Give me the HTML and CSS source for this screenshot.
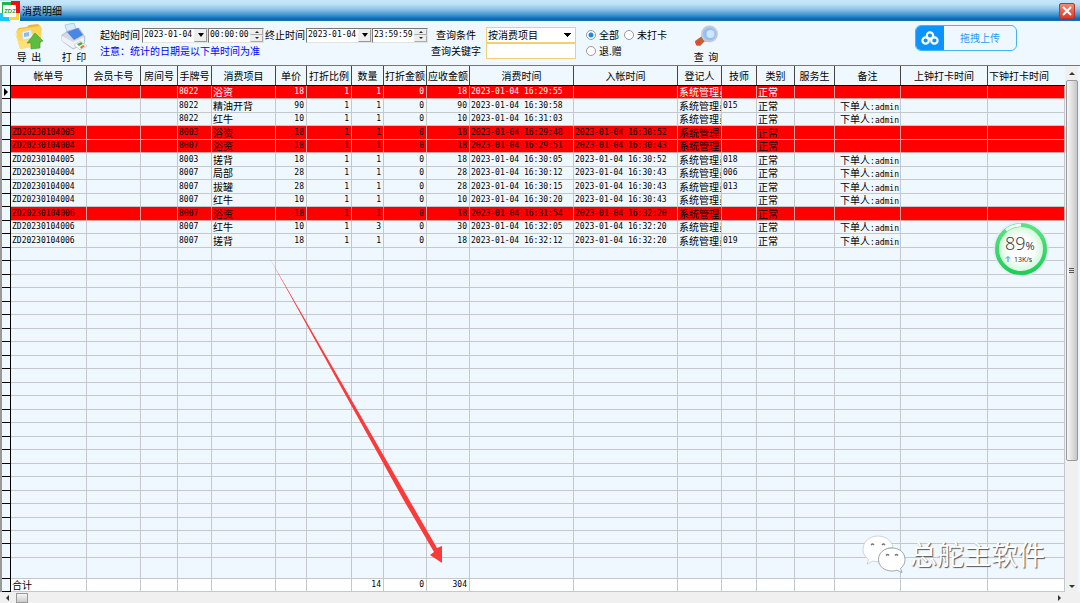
FILE: index.html
```html
<!DOCTYPE html>
<html lang="zh-CN">
<head>
<meta charset="utf-8">
<title>消费明细</title>
<link rel="stylesheet" href="styles.css">
</head>
<body>
<header class="titlebar">
  <svg class="logo" width="20" height="20" viewBox="0 0 20 20" aria-hidden="true">
    <rect width="20" height="20" fill="#fff"/>
    <path d="M2 1h10v4H6v8H2z" fill="#16b84a"/>
    <path d="M11 0h9v12h-4V5h-5z" fill="#f01010"/>
    <path d="M0 12h4v4h6v4H0z" fill="#10ccf8"/>
    <path d="M15 12h4v7H9v-4h6z" fill="#f8d838"/>
    <rect x="3" y="4" width="13" height="12" rx="1" fill="#fff"/>
    <text x="10" y="12" text-anchor="middle" class="logo-text">ZDZ</text>
  </svg>
  <h1 class="title">消费明细</h1>
  <button class="close" type="button" aria-label="关闭">
    <svg width="10" height="10" viewBox="0 0 10 10"><path d="M1 1l8 8M9 1l-8 8" stroke="#fff" stroke-width="2"/></svg>
  </button>
</header>

<form class="toolbar">
  <button class="tool" type="button">
    <svg width="30" height="28" viewBox="0 0 30 28" aria-hidden="true">
      <path d="M3 7l2-2 8-1 2-2 9-1 3 3v16l-20 4z" fill="#eeb535"/>
      <path d="M2 8l4-2 19-3 3 2-2 17-20 4z" fill="#fbd65c"/>
      <path d="M8 9l9-2 2 8-10 2z" fill="#eaf3fc" stroke="#c9d9ec" stroke-width=".6"/>
      <path d="M10 10l5-1v4l-5 1z" fill="#8fb9e8"/>
      <path d="M1 10l5 8 20-3-1 8-19 3z" fill="#fde07a"/>
      <path d="M21 10l8 8-3 1 0 6-9 1 0-6-4 0z" fill="#5cbe3e" stroke="#3f9c2c" stroke-width=".6"/>
    </svg>
    <span>导&nbsp;&nbsp;出</span>
  </button>
  <button class="tool" type="button">
    <svg width="28" height="28" viewBox="0 0 28 28" aria-hidden="true">
      <path d="M5 2l9-2 3 9-9 4z" fill="#d6ecff" stroke="#8fbce8" stroke-width=".7"/>
      <path d="M2 12l6-4 11-3 6 9-1 7-11 5-11-8z" fill="#d3d8e4" stroke="#9ba2b8" stroke-width=".6"/>
      <path d="M7 9l11-4 5 7-9 5z" fill="#4a86e4"/>
      <path d="M2 13l11 6 11-5v6l-11 5-11-7z" fill="#f0f2f7"/>
      <path d="M14 22l6-4 7 5-7 4z" fill="#fff" stroke="#a6adba" stroke-width=".5"/>
      <path d="M17 21l4-2 2 2-4 2z" fill="#47b046"/><path d="M20 24l3-2 2 1-4 3z" fill="#ef6b3a"/>
    </svg>
    <span>打&nbsp;&nbsp;印</span>
  </button>

  <div class="period">
    <div class="line">
      <label for="from-date">起始时间</label>
      <span class="field date"><input id="from-date" value="2023-01-04"><button type="button" class="drop" aria-label="选择日期"></button></span>
      <span class="field time"><input aria-label="起始时刻" value="00:00:00"><span class="spin"><button type="button" aria-label="增加"></button><button type="button" aria-label="减少"></button></span></span>
      <label for="to-date" class="to">终止时间</label>
      <span class="field date"><input id="to-date" value="2023-01-04"><button type="button" class="drop" aria-label="选择日期"></button></span>
      <span class="field time"><input aria-label="终止时刻" value="23:59:59"><span class="spin"><button type="button" aria-label="增加"></button><button type="button" aria-label="减少"></button></span></span>
    </div>
    <p class="note">注意：统计的日期是以下单时间为准</p>
  </div>

  <div class="query">
    <label for="cond">查询条件</label>
    <select id="cond" class="box"><option>按消费项目</option></select>
    <label for="key">查询关键字</label>
    <input id="key" class="box">
  </div>

  <div class="radios">
    <label><input type="radio" name="scope" checked>全部</label>
    <label><input type="radio" name="scope">未打卡</label>
    <label><input type="radio" name="scope">退.赠</label>
  </div>

  <button class="tool search" type="button">
    <svg width="26" height="28" viewBox="0 0 26 28" aria-hidden="true">
      <path d="M2 18l7-5 4 4-6 6-4-1z" fill="#b9653c"/><path d="M2 19l4-2 2 3-4 3z" fill="#e8472b"/>
      <path d="M8 13l4 6 5 0-6-9z" fill="#b4bac6"/>
      <circle cx="16.500" cy="11" r="7.500" fill="#8fc0fa" stroke="#c6cad4" stroke-width="2"/>
      <circle cx="17.500" cy="11" r="4" fill="#cfe6ff"/>
    </svg>
    <span>查&nbsp;&nbsp;询</span>
  </button>

  <button class="upload" type="button">
    <span class="cloud"><svg width="18" height="14" viewBox="0 0 18 14" fill="none" stroke="#fff" stroke-width="2.200"><circle cx="9" cy="4.500" r="3.200"/><circle cx="4.600" cy="9.500" r="3.200"/><circle cx="13.400" cy="9.500" r="3.200"/></svg></span>
    <span class="upload-text">拖拽上传</span>
  </button>
</form>

<main class="grid-area">
  <div class="grid-body">
  <table class="grid">
    <colgroup>
      <col class="w9"><col class="w76"><col class="w54"><col class="w37"><col class="w34"><col class="w64"><col class="w31"><col class="w45"><col class="w32"><col class="w43"><col class="w43"><col class="w104"><col class="w104"><col class="w44"><col class="w35"><col class="w38"><col class="w40"><col class="w66"><col class="w87"><col class="w77">
    </colgroup>
    <thead>
      <tr><th></th><th>帐单号</th><th>会员卡号</th><th>房间号</th><th>手牌号</th><th>消费项目</th><th>单价</th><th>打折比例</th><th>数量</th><th>打折金额</th><th>应收金额</th><th>消费时间</th><th>入帐时间</th><th>登记人</th><th>技师</th><th>类别</th><th>服务生</th><th>备注</th><th>上钟打卡时间</th><th class="left">下钟打卡时间</th></tr>
    </thead>
    <tbody id="rows"></tbody>
    <tfoot>
      <tr><td></td><td class="cn">合计</td><td></td><td></td><td></td><td></td><td></td><td></td><td class="num">14</td><td class="num">0</td><td class="num">304</td><td></td><td></td><td></td><td></td><td></td><td></td><td></td><td></td><td></td></tr>
    </tfoot>
  </table>
  </div>
  <div class="vscroll"><i class="up"></i><div class="vthumb"><i class="grip"></i></div><i class="down"></i></div>
</main>
<div class="hscroll"><i class="prev"></i><i class="hthumb"></i><i class="next"></i></div>

<svg class="pointer" width="180" height="310" viewBox="0 0 180 310" aria-hidden="true">
  <path d="M0 0L168 291L173 289L173 306L161 298L165 295L134 242Z" fill="#fb3a3a"/>
</svg>

<svg class="ball" width="60" height="60" viewBox="0 0 60 60" role="img" aria-label="89% 13K/s">
  <defs>
    <radialGradient id="glow"><stop offset=".5" stop-color="#fff"/><stop offset="1" stop-color="#ccf5d6"/></radialGradient>
    <linearGradient id="ring" x2="0" y2="1"><stop offset="0" stop-color="#5be381"/><stop offset="1" stop-color="#1fce58"/></linearGradient>
  </defs>
  <circle cx="30" cy="30" r="28" fill="#dfe8f0" opacity=".6"/>
  <circle cx="30" cy="30" r="24" fill="url(#glow)" stroke="url(#ring)" stroke-width="4"/>
  <path d="M15 11.300A24 24 0 0 1 30 6" fill="none" stroke="#f2fbf5" stroke-width="3"/>
  <text x="14" y="31" class="pct">89<tspan class="sign">%</tspan></text>
  <path d="M17 43v-5M15 39.500l2-2 2 2" fill="none" stroke="#2196f3"/>
  <text x="23" y="43" class="rate">13K/s</text>
</svg>

<div class="watermark">
  <svg width="44" height="38" viewBox="0 0 44 38" aria-hidden="true">
    <path d="M16 1C7 1 1 7 1 14.500c0 4 2 7.500 5.500 10L5 29l6-3c2 .6 4 .8 6 .7C16 19 23 12 31 12.500 30 6 24 1 16 1z" fill="#fff" stroke="#b4babe" stroke-width=".6"/>
    <path d="M30 13c-8 0-13.500 5-13.500 11.500S22 36 30 36c2 0 3.500-.2 5-.8l5 2.300-1.500-4c3-2.300 4.500-5.300 4.500-9C43 18 38 13 30 13z" fill="#fff" stroke="#8b9195" stroke-width=".8"/>
    <path d="M9 10q1.500-2 3 0M20 10q1.500-2 3 0M24 20.500q1.500-2 3 0M33 20.500q1.500-2 3 0" fill="none" stroke="#777" stroke-width="1.300"/>
  </svg>
  <span>总舵主软件</span>
</div>
<script src="app.js"></script>
</body>
</html>
```

FILE: styles.css
```css
* { box-sizing: border-box; }

body {
  margin: 0;
  min-height: 100vh;
  display: flex;
  flex-direction: column;
  position: relative;
  overflow: hidden;
  background: #f0f8ff;
  color: #000;
  font: 10px/12px "Noto Sans CJK SC", sans-serif;
}

button, input, select { font: inherit; color: inherit; margin: 0; padding: 0; }

/* title bar */
.titlebar {
  display: flex;
  align-items: center;
  height: 21px;
  padding-right: 5px;
  background: linear-gradient(#c3e6fb 0, #bfe2f7 4px, #92c6e8 9px, #3f93cf 15px, #0767b4 19px, #1a6fb5 100%);
}
.logo { display: block; }
.logo-text { font: bold 6px "Liberation Sans", sans-serif; fill: #27a05a; }
.title { flex: 1; margin: 0 2px; font-size: 10px; font-weight: 400; }
.close {
  display: grid;
  place-items: center;
  width: 16px;
  height: 16px;
  border: 1px solid #b8342a;
  border-radius: 2px;
  background: linear-gradient(#f08a78, #dc3a28);
}

/* toolbar */
.toolbar { display: flex; align-items: flex-start; height: 44px; padding: 2px 0 0 14px; }
.tool {
  display: flex;
  flex-direction: column;
  align-items: center;
  width: 30px;
  margin-right: 15px;
  border: 0;
  background: none;
  line-height: 12px;
  white-space: nowrap;
}
.period { width: 328px; margin-left: -4px; padding-top: 4px; }
.line { display: flex; align-items: center; height: 16px; }
.line label { width: 42px; white-space: nowrap; }
.line .to { padding-left: 1px; width: 42px; }
.field {
  display: flex;
  height: 15px;
  border: 1px solid #e3e3e3;
  border-top-color: #777;
  border-left-color: #777;
  background: #fff;
  font: 8px/12px "DejaVu Sans Mono", monospace;
}
.field input { flex: 1; min-width: 0; border: 0; background: none; padding-left: 1px; }
.date { width: 66px; }
.time { width: 56px; }
.drop { width: 13px; border: 1px solid #999; border-top-color: #eee; border-left-color: #eee; background: #eee; display: grid; place-items: center; }
.drop::before { content: ""; border: 3px solid transparent; border-top: 4px solid #000; border-bottom: 0; }
.spin { display: flex; flex-direction: column; width: 13px; }
.spin button { flex: 1; border: 1px solid #aaa; border-top-color: #eee; border-left-color: #eee; background: #eee; display: grid; place-items: center; }
.spin button::before { content: ""; border: 2px solid transparent; border-bottom-color: #222; border-top: 0; }
.spin button + button::before { border: 2px solid transparent; border-top-color: #222; border-bottom: 0; }
.note { margin: 0; color: #00f; line-height: 16px; white-space: nowrap; }

.query {
  display: grid;
  grid-template-columns: 55px 90px;
  grid-auto-rows: 16px;
  align-items: center;
  padding-top: 4px;
  margin-left: 3px;
}
.query label { width: 50px; text-align: center; white-space: nowrap; }
.box { width: 90px; height: 16px; border: 1px solid #f2cf74; background: #fff; outline: 0; }
select.box {
  appearance: none;
  padding-left: 1px;
  background: #fff conic-gradient(from -45deg at 50% 100%, #000 90deg, #fff 0) no-repeat right 4px center / 7px 4px;
}
.radios {
  display: grid;
  grid-template-columns: 38px 44px;
  grid-auto-rows: 16px;
  align-items: center;
  padding: 4px 0 0 10px;
}
.radios label { display: flex; align-items: center; gap: 3px; white-space: nowrap; }
.radios input {
  appearance: none;
  width: 10px;
  height: 10px;
  border: 1px solid #999;
  border-radius: 50%;
  background: #fff;
}
.radios input:checked { background: radial-gradient(circle, #168ce0 0 2px, #fff 3px); }
.search { margin: 0 0 0 23px; }
.upload {
  display: flex;
  width: 102px;
  height: 26px;
  margin: 2px 63px 0 auto;
  overflow: hidden;
  border: 1px solid #45b4f5;
  border-radius: 6px;
  background: #f0f8ff;
  color: #1e9df2;
}
.cloud { display: grid; place-items: center; width: 28px; height: 24px; background: #0b94fb; }
.upload-text { flex: 1; line-height: 24px; text-align: center; }

/* data grid */
.grid-area { flex: 1; display: flex; border-top: 1px solid #777; border-left: 2px solid #999; }
.grid-body { flex: 1; min-width: 0; }
.grid {
  width: 100%;
  height: 526px;
  table-layout: fixed;
  border-collapse: separate;
  border-spacing: 0;
}
.w9 { width: 9px; } .w76 { width: 76px; } .w54 { width: 54px; } .w37 { width: 37px; }
.w34 { width: 34px; } .w64 { width: 64px; } .w31 { width: 31px; } .w45 { width: 45px; }
.w32 { width: 32px; } .w43 { width: 43px; } .w104 { width: 104px; } .w44 { width: 44px; }
.w35 { width: 35px; } .w38 { width: 38px; } .w40 { width: 40px; } .w66 { width: 66px; }
.w87 { width: 87px; } .w77 { width: 77px; }

th, td {
  padding: 0 1px;
  white-space: nowrap;
  border-right: 1px solid #c4c8cc;
  border-bottom: 1px solid #c4c8cc;
  line-height: 12px;
}
th { height: 20px; padding: 0; font-weight: 400; border-right-color: #444; border-bottom: 1px solid #000; }
th.left { text-align: left; padding-left: 1px; border-right: 0; }
td { height: 13px; font: 8px/12px "DejaVu Sans Mono", monospace; }
td.cn { font: 10px/12px "Noto Sans CJK SC", sans-serif; }
td.who { overflow-x: clip; }
td.num { text-align: right; padding-right: 2px; }
td.memo { text-align: right; }
td:first-child { border-color: #000; padding: 0; }
th:first-child { border-right-color: #000; }
.red td:not(:first-child) { background: #f00; border-color: #e0a0a0; }
.current td { color: #fff; }
.current td:first-child::before {
  content: "";
  display: block;
  margin-left: 2px;
  width: 0;
  border: 4px solid transparent;
  border-left: 4px solid #000;
  border-right: 0;
}
.last td { height: 20px; }
tfoot td:not(:first-child) { background: #fff; }
.mono { font: 8px/0 "DejaVu Sans Mono", monospace; }

/* scroll bars */
.vscroll {
  display: flex;
  flex-direction: column;
  align-items: center;
  width: 13px;
  margin-right: 2px;
  background: #f0f0f0;
}
.up, .down { width: 0; border: 3px solid transparent; }
.up { border-bottom: 3px solid #333; border-top: 0; margin: 6px 0 5px; }
.down { border-top: 3px solid #333; border-bottom: 0; margin: auto 0 4px; }
.vthumb {
  flex: 0 0 72.5%;
  display: grid;
  place-items: center;
  width: 12px;
  border: 1px solid #999;
  border-radius: 2px;
  background: linear-gradient(90deg, #f6f6f6, #e0e0e0 50%, #c6c6c6);
}
.grip { width: 5px; height: 6px; background: repeating-linear-gradient(#555 0 1px, transparent 1px 2px); }
.hscroll { display: flex; align-items: center; height: 11px; padding: 0 19px 0 6px; background: #f0f0f0; }
.prev, .next { border: 3px solid transparent; }
.prev { border-right: 3px solid #333; border-left: 0; }
.next { border-left: 3px solid #333; border-right: 0; margin-left: auto; }
.hthumb { width: 12px; height: 10px; margin-left: 7px; border: 1px solid #999; background: linear-gradient(#f4f4f4, #ccc); }

/* overlays */
.pointer { position: absolute; left: 269px; top: 257px; }
.ball { position: absolute; right: 29px; top: 219px; }
.pct { font: 300 18px "Open Sans", sans-serif; fill: #333; }
.sign { font-size: 11px; font-weight: 400; }
.rate { font: 7px "Open Sans", sans-serif; fill: #222; }
.watermark {
  position: absolute;
  right: 35px;
  bottom: 30px;
  display: flex;
  align-items: center;
  gap: 4px;
  color: #fff;
  font-size: 27px;
  font-weight: 400;
  line-height: 38px;
  text-shadow: 1px 1px 1px #555;
}
```

FILE: app.js
```js
const ADMIN = "系统管理员";
const MEMO = "下单人:admin";

// bill, tag, item, price, quantity, amount, ordered, booked, technician, red
const records = [
  ["", "8022", "浴资", 18, 1, 18, "16:29:55", "", "", true],
  ["", "8022", "精油开背", 90, 1, 90, "16:30:58", "", "015", false],
  ["", "8022", "红牛", 10, 1, 10, "16:31:03", "", "", false],
  ["ZD20230104005", "8003", "浴资", 18, 1, 18, "16:29:48", "16:30:52", "", true],
  ["ZD20230104004", "8007", "浴资", 18, 1, 18, "16:29:51", "16:30:43", "", true],
  ["ZD20230104005", "8003", "搓背", 18, 1, 18, "16:30:05", "16:30:52", "018", false],
  ["ZD20230104004", "8007", "局部", 28, 1, 28, "16:30:12", "16:30:43", "006", false],
  ["ZD20230104004", "8007", "拔罐", 28, 1, 28, "16:30:15", "16:30:43", "013", false],
  ["ZD20230104004", "8007", "红牛", 10, 1, 10, "16:30:20", "16:30:43", "", false],
  ["ZD20230104006", "8007", "浴资", 18, 1, 18, "16:31:54", "16:32:20", "", true],
  ["ZD20230104006", "8007", "红牛", 10, 3, 30, "16:32:05", "16:32:20", "", false],
  ["ZD20230104006", "8007", "搓背", 18, 1, 18, "16:32:12", "16:32:20", "019", false]
];

const COLUMNS = 20;
const EMPTY_ROWS = 24;
const classes = { 5: "cn", 6: "num", 7: "num", 8: "num", 9: "num", 10: "num", 13: "cn who", 15: "cn", 17: "cn memo" };
const body = document.getElementById("rows");
const stamp = time => (time ? "2023-01-04 " + time : "");

function addRow(values, rowClass) {
  const tr = body.insertRow();
  tr.className = rowClass;
  for (let i = 0; i < COLUMNS; i++) {
    const td = tr.insertCell();
    const text = values[i] === undefined ? "" : String(values[i]);
    if (text && classes[i]) td.className = classes[i];
    if (text === MEMO) {
      const who = document.createElement("span");
      who.className = "mono";
      who.textContent = ":admin";
      td.append("下单人", who);
    } else {
      td.textContent = text;
    }
  }
}

records.forEach(([bill, tag, item, price, qty, sum, ordered, booked, tech, red], i) => {
  addRow(
    ["", bill, "", "", tag, item, price, 1, qty, 0, sum, stamp(ordered), stamp(booked), ADMIN, tech, "正常", "", red ? "" : MEMO, "", ""],
    (red ? "red" : "") + (i === 0 ? " current" : "")
  );
});
for (let i = 0; i < EMPTY_ROWS; i++) addRow([], i === EMPTY_ROWS - 1 ? "last" : "");
```
